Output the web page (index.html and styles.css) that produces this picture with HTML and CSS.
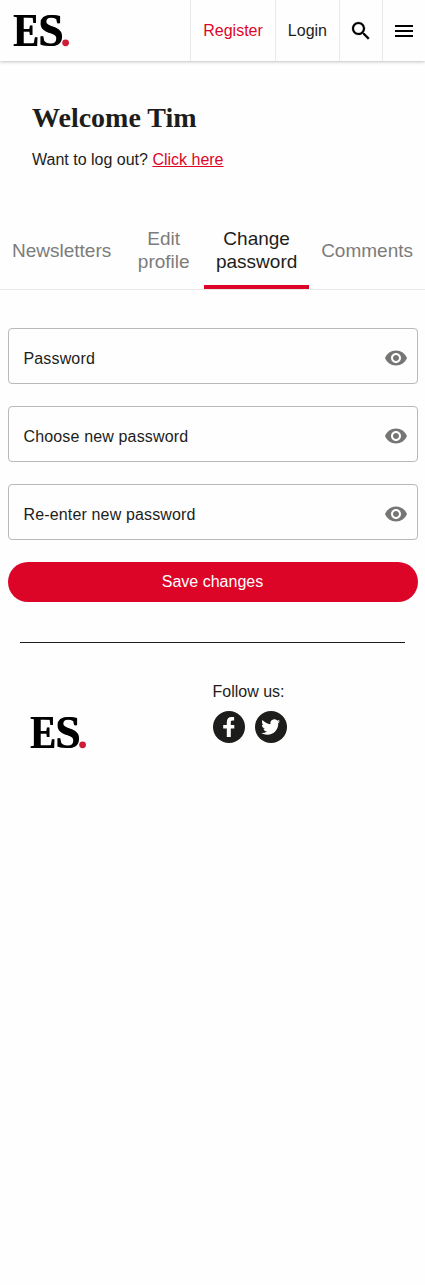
FILE: index.html
```html
<!DOCTYPE html>
<html lang="en">
<head>
<meta charset="utf-8">
<meta name="viewport" content="width=device-width, initial-scale=1">
<title>ES - Change password</title>
<link rel="stylesheet" href="styles.css">
</head>
<body>
<svg class="sprite" aria-hidden="true">
  <symbol id="logo" viewBox="0 0 58 34">
    <text class="logo-letter" x="0" y="31.500" textLength="25.500" lengthAdjust="spacingAndGlyphs">E</text>
    <text class="logo-letter" x="25" y="31.500" textLength="25" lengthAdjust="spacingAndGlyphs">S</text>
    <circle cx="52.600" cy="28.800" r="3.400" fill="#ce1c36"/>
  </symbol>
  <symbol id="eye" viewBox="0 0 24 24">
    <path d="M12 4.500C7 4.500 2.730 7.610 1 12c1.730 4.390 6 7.500 11 7.500s9.270-3.110 11-7.500c-1.730-4.390-6-7.500-11-7.500zM12 17c-2.760 0-5-2.240-5-5s2.240-5 5-5 5 2.240 5 5-2.240 5-5 5zm0-8c-1.660 0-3 1.340-3 3s1.340 3 3 3 3-1.340 3-3-1.340-3-3-3z"/>
  </symbol>
</svg>

<header class="header">
  <a class="header-logo"><svg class="logo" role="img" aria-label="ES."><use href="#logo"/></svg></a>
  <nav class="header-nav">
    <a class="header-item register">Register</a>
    <a class="header-item">Login</a>
    <a class="header-item icon-item" aria-label="Search"><svg class="icon search" viewBox="0 0 24 24"><path d="M15.500 14h-.79l-.28-.27C15.410 12.590 16 11.110 16 9.500 16 5.910 13.090 3 9.500 3S3 5.910 3 9.500 5.910 16 9.500 16c1.610 0 3.090-.59 4.230-1.570l.27.28v.79l5 4.990L20.490 19l-4.990-5zm-6 0C7.010 14 5 11.990 5 9.500S7.010 5 9.500 5 14 7.010 14 9.500 11.990 14 9.500 14z"/></svg></a>
    <a class="header-item icon-item" aria-label="Menu"><svg class="icon" viewBox="0 0 24 24"><path d="M3 18h18v-2H3v2zm0-5h18v-2H3v2zm0-7v2h18V6H3z"/></svg></a>
  </nav>
</header>

<main>
  <section class="welcome">
    <h1>Welcome Tim</h1>
    <p>Want to log out? <a class="logout">Click here</a></p>
  </section>
  <nav class="tabs">
    <a class="tab">Newsletters</a>
    <a class="tab tab-edit">Edit profile</a>
    <a class="tab tab-password active">Change password</a>
    <a class="tab">Comments</a>
  </nav>
  <form class="form">
    <div class="field"><span>Password</span><svg class="eye"><use href="#eye"/></svg></div>
    <div class="field"><span>Choose new password</span><svg class="eye"><use href="#eye"/></svg></div>
    <div class="field"><span>Re-enter new password</span><svg class="eye"><use href="#eye"/></svg></div>
    <button class="save" type="button">Save changes</button>
  </form>
</main>

<footer class="footer">
  <svg class="logo footer-logo" role="img" aria-label="ES."><use href="#logo"/></svg>
  <div class="follow">
    <p>Follow us:</p>
    <div class="social">
      <svg viewBox="0 0 32 32" role="img" aria-label="Facebook"><circle cx="16" cy="16" r="16" fill="#1d1d1b"/><path fill="#fff" d="M13.800 26v-8.400H10.200v-3.600h3.600v-2.500c0-3.600 1.800-5.400 4.800-5.400h2.500v3.400h-1.500c-1.500 0-1.800.7-1.800 1.900v2.600h3.500v3.600h-3.500V26z"/></svg>
      <svg viewBox="0 0 32 32" role="img" aria-label="Twitter"><circle cx="16" cy="16" r="16" fill="#1d1d1b"/><path fill="#fff" transform="translate(6.200 6.600) scale(.79)" d="M23.953 4.570a10 10 0 01-2.825.775 4.958 4.958 0 002.163-2.723c-.951.555-2.005.959-3.127 1.184a4.920 4.920 0 00-8.384 4.482C7.690 8.095 4.067 6.130 1.640 3.162a4.822 4.822 0 00-.666 2.475c0 1.710.87 3.213 2.188 4.096a4.904 4.904 0 01-2.228-.616v.06a4.923 4.923 0 003.946 4.827 4.996 4.996 0 01-2.212.085 4.936 4.936 0 004.604 3.417 9.867 9.867 0 01-6.102 2.105c-.39 0-.779-.023-1.170-.067a13.995 13.995 0 007.557 2.209c9.053 0 13.998-7.496 13.998-13.985 0-.21 0-.42-.015-.63A9.935 9.935 0 0024 4.590z"/></svg>
    </div>
  </div>
</footer>
</body>
</html>
```
FILE: styles.css
```css
* { box-sizing: border-box; }

body {
  margin: 0;
  background: #fefefe;
  color: #1d1d1b;
  font: 16px/20px "Liberation Sans", Arial, sans-serif;
}

h1, p { margin: 0; }

.sprite { display: none; }

.header {
  display: flex;
  justify-content: space-between;
  height: 61px;
  background: #fefefe;
  box-shadow: 0 1px 3px rgba(0, 0, 0, .24);
}

.header-logo { padding: 14px 0 0 13px; }

.logo { display: block; width: 58px; height: 34px; }

/* The horizontal shadow thickens the stems and keeps the hairlines thin. */
.logo-letter {
  font: bold 46px "Liberation Serif", "Times New Roman", serif;
  fill: #000;
  filter: drop-shadow(1.3px 0 0 #000);
}

.header-nav { display: flex; }

.header-item {
  display: flex;
  align-items: center;
  padding: 0 12px;
  border-left: 1px solid #e9e9e9;
}

.register { color: #dc0528; }

.icon-item { padding: 0 9px; }

.icon { width: 24px; height: 24px; fill: #000; }

.search { stroke: #000; stroke-width: .2px; }

.welcome { padding: 40px 32px 0; }

.welcome h1 {
  font: bold 28px/34px "Liberation Serif", "Times New Roman", serif;
}

.welcome p { margin-top: 15px; }

.logout { color: #dc0528; text-decoration: underline; }

.tabs {
  display: flex;
  height: 79px;
  margin-top: 41px;
  border-bottom: 1px solid #e9e9e9;
  font-size: 19px;
  line-height: 23px;
}

.tab {
  display: flex;
  align-items: center;
  justify-content: center;
  padding: 4px 12px 0;
  border-bottom: 4px solid transparent;
  color: #7c7c7b;
  text-align: center;
}

.tab-edit { width: 81px; }

.tab-password { width: 105px; }

.tab.active { border-color: #dc0528; color: #1d1d1b; }

.form {
  display: flex;
  flex-direction: column;
  gap: 22px;
  padding: 38px 7px 0 8px;
}

.field {
  display: flex;
  align-items: center;
  justify-content: space-between;
  height: 56px;
  padding: 6px 9px 0 14.5px;
  border: 1px solid #b9b9b9;
  border-radius: 4px;
  letter-spacing: .15px;
}

.eye { width: 24px; height: 24px; margin-top: -3px; fill: #767674; }

.save {
  height: 40px;
  padding: 0 1px 0 0;
  border: 0;
  border-radius: 20px;
  background: #dc0528;
  color: #fff;
  font: inherit;
}

.footer {
  display: grid;
  grid-template-columns: 1fr 1fr;
  margin: 40px 20px 0;
  padding-top: 39px;
  border-top: 1px solid #1d1d1b;
}

.footer-logo { margin: 34px 0 0 9.5px; }

.social { display: flex; gap: 10px; margin-top: 9px; }

.social svg { width: 32px; height: 32px; }
```
